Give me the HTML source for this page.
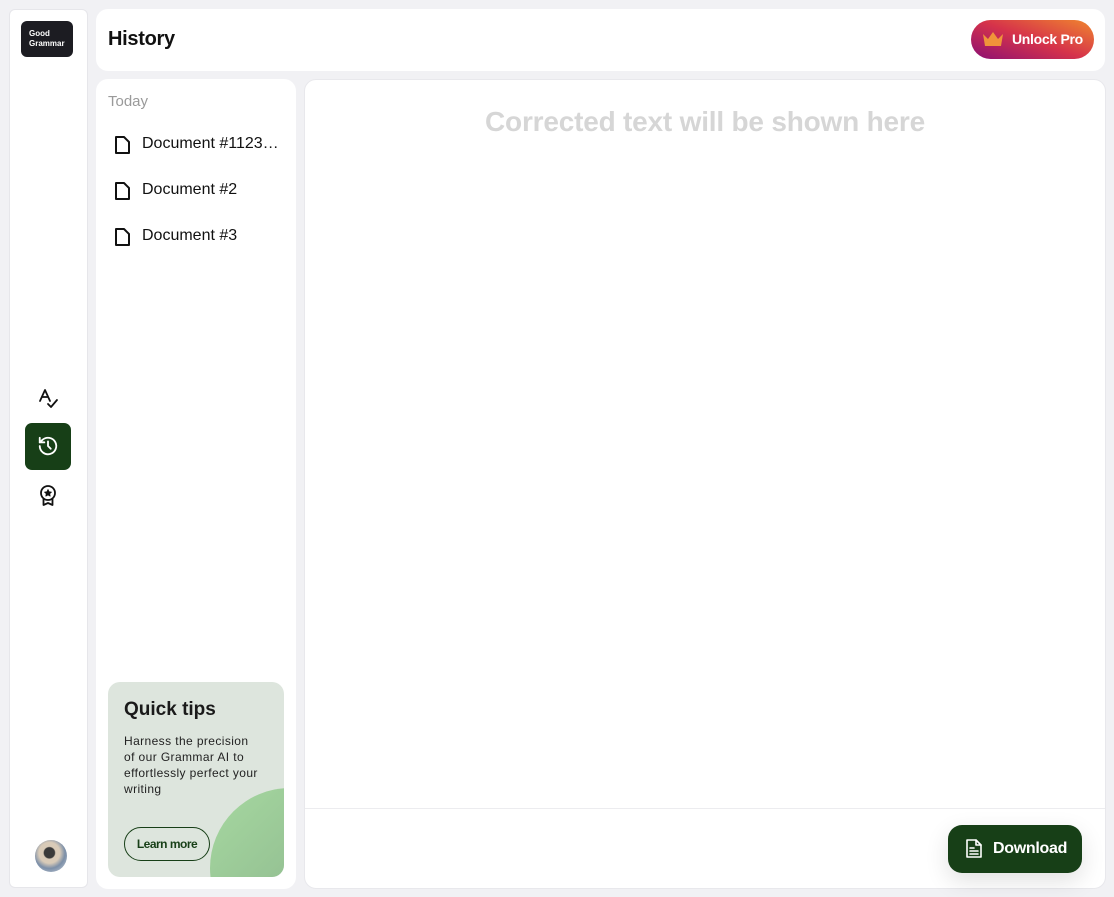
<!DOCTYPE html>
<html><head><style>
*{box-sizing:border-box;margin:0;padding:0}
html,body{width:1114px;height:897px;overflow:hidden}
body{background:#f1f1f4;font-family:"Liberation Sans",sans-serif;position:relative;color:#111}
.p{position:absolute;background:#fff}
.doc span{white-space:nowrap}
</style></head><body>
<div class="p" style="left:9px;top:9px;width:79px;height:879px;border-radius:6px;border:1px solid #e6e6ea"></div>
<div style="position:absolute;left:21px;top:21px;width:52px;height:36px;background:#1c1c22;border-radius:6px;color:#fff;font-size:8px;font-weight:bold;line-height:10px;padding:8px 0 0 8px">Good<br>Grammar</div>
<svg style="position:absolute;left:36px;top:387px" width="26" height="24" viewBox="0 0 26 24" fill="none" stroke="#111" stroke-width="1.8" stroke-linecap="round" stroke-linejoin="round"><path d="M4 14 L9 3 L14 14 M6 10 H12"/><path d="M12 17 L15 20 L21 13"/></svg>
<div style="position:absolute;left:25px;top:423px;width:46px;height:47px;background:#173f17;border-radius:7px"></div>
<svg style="position:absolute;left:37px;top:435px" width="22" height="22" viewBox="0 0 24 24" fill="none" stroke="#fff" stroke-width="2" stroke-linecap="round" stroke-linejoin="round"><path d="M3 12a9 9 0 1 0 3-6.7L3 8"/><path d="M3 3v5h5"/><path d="M12 7v5l3 3"/></svg>
<svg style="position:absolute;left:38px;top:484px" width="20" height="24" viewBox="0 0 20 24" fill="none" stroke="#111" stroke-width="1.8" stroke-linejoin="round"><circle cx="10" cy="9" r="7"/><path d="M10 5.5l1.1 2.3 2.4.3-1.8 1.6.5 2.4-2.2-1.2-2.2 1.2.5-2.4-1.8-1.6 2.4-.3z" fill="#111" stroke-width="0.8"/><path d="M5.5 15 L5.5 21 L10 19 L14.5 21 L14.5 15"/></svg>
<div style="position:absolute;left:35px;top:840px;width:32px;height:32px;border-radius:50%;background:radial-gradient(circle at 45% 40%,#3a3a3a 0 20%,#d9cbb8 24% 40%,#7c8fa8 60%,#ccd3dc 100%)"></div>

<div class="p" style="left:96px;top:9px;width:1009px;height:62px;border-radius:12px"></div>
<div style="position:absolute;left:108px;top:28px;font-size:20px;font-weight:bold;letter-spacing:-0.3px">History</div>
<div style="position:absolute;left:971px;top:20px;width:123px;height:39px;border-radius:20px;background:linear-gradient(200deg,#f0862e 0%,#d6334a 50%,#8c1074 100%);color:#fff;font-weight:bold;font-size:14px;line-height:39px;padding-left:41px;letter-spacing:-0.3px">Unlock Pro</div>
<svg style="position:absolute;left:982px;top:31px" width="22" height="16" viewBox="0 0 22 16"><path d="M1 3 L6 8 L11 1 L16 8 L21 3 L19 15 L3 15 Z" fill="#f0943a"/></svg>

<div class="p" style="left:96px;top:79px;width:200px;height:810px;border-radius:12px"></div>
<div style="position:absolute;left:108px;top:93px;font-size:15px;color:#9a9a9a">Today</div>
<div class="doc" style="position:absolute;left:114px;top:134px;font-size:16px;line-height:20px">
<div style="height:46px;position:relative"><svg style="position:absolute;left:0;top:1px" width="17" height="20" viewBox="0 0 17 20" fill="none" stroke="#111" stroke-width="2" stroke-linejoin="round"><path d="M2 2 H10 L15 7 V18 H2 Z"/></svg><span style="position:absolute;left:28px;top:0">Document #1123…</span></div>
<div style="height:46px;position:relative"><svg style="position:absolute;left:0;top:1px" width="17" height="20" viewBox="0 0 17 20" fill="none" stroke="#111" stroke-width="2" stroke-linejoin="round"><path d="M2 2 H10 L15 7 V18 H2 Z"/></svg><span style="position:absolute;left:28px;top:0">Document #2</span></div>
<div style="height:46px;position:relative"><svg style="position:absolute;left:0;top:1px" width="17" height="20" viewBox="0 0 17 20" fill="none" stroke="#111" stroke-width="2" stroke-linejoin="round"><path d="M2 2 H10 L15 7 V18 H2 Z"/></svg><span style="position:absolute;left:28px;top:0">Document #3</span></div>
</div>
<div style="position:absolute;left:108px;top:682px;width:176px;height:195px;border-radius:12px;background:#dde5dd;overflow:hidden">
<div style="position:absolute;left:102px;top:106px;width:160px;height:160px;border-radius:50%;background:linear-gradient(135deg,#a6d8a0,#86ae88)"></div>
<div style="position:absolute;left:16px;top:17px;font-size:19px;font-weight:bold;color:#1a1a1a">Quick tips</div>
<div style="position:absolute;left:16px;top:51px;width:138px;font-size:12px;line-height:16px;letter-spacing:0.4px;color:#222">Harness the precision of our Grammar AI to effortlessly perfect your writing</div>
<div style="position:absolute;left:16px;top:145px;width:86px;height:34px;border:1px solid #173f17;border-radius:17px;font-size:12px;font-weight:bold;line-height:32px;text-align:center;color:#173f17;letter-spacing:-0.5px">Learn more</div>
</div>

<div class="p" style="left:304px;top:79px;width:802px;height:810px;border-radius:12px;border:1px solid #e8e8ec"></div>
<div style="position:absolute;left:304px;top:106px;width:802px;text-align:center;font-size:28px;font-weight:bold;color:#d6d6d6;letter-spacing:-0.2px">Corrected text will be shown here</div>
<div style="position:absolute;left:305px;top:808px;width:800px;height:1px;background:#ececef"></div>
<div style="position:absolute;left:948px;top:825px;width:134px;height:48px;border-radius:14px;background:#173f17;color:#fff;font-weight:bold;font-size:16px;line-height:48px;padding-left:45px;letter-spacing:-0.3px;box-shadow:0 8px 24px rgba(0,0,0,.12)">Download</div>
<svg style="position:absolute;left:965px;top:838px" width="18" height="21" viewBox="0 0 18 21" fill="none" stroke="#fff" stroke-width="1.6" stroke-linejoin="round" stroke-linecap="round"><path d="M2 2 H11 L16 7 V19 H2 Z"/><path d="M11 2 V7 H16"/><path d="M5 10 H9 M5 13 H13 M5 16 H13"/></svg>
</body></html>
